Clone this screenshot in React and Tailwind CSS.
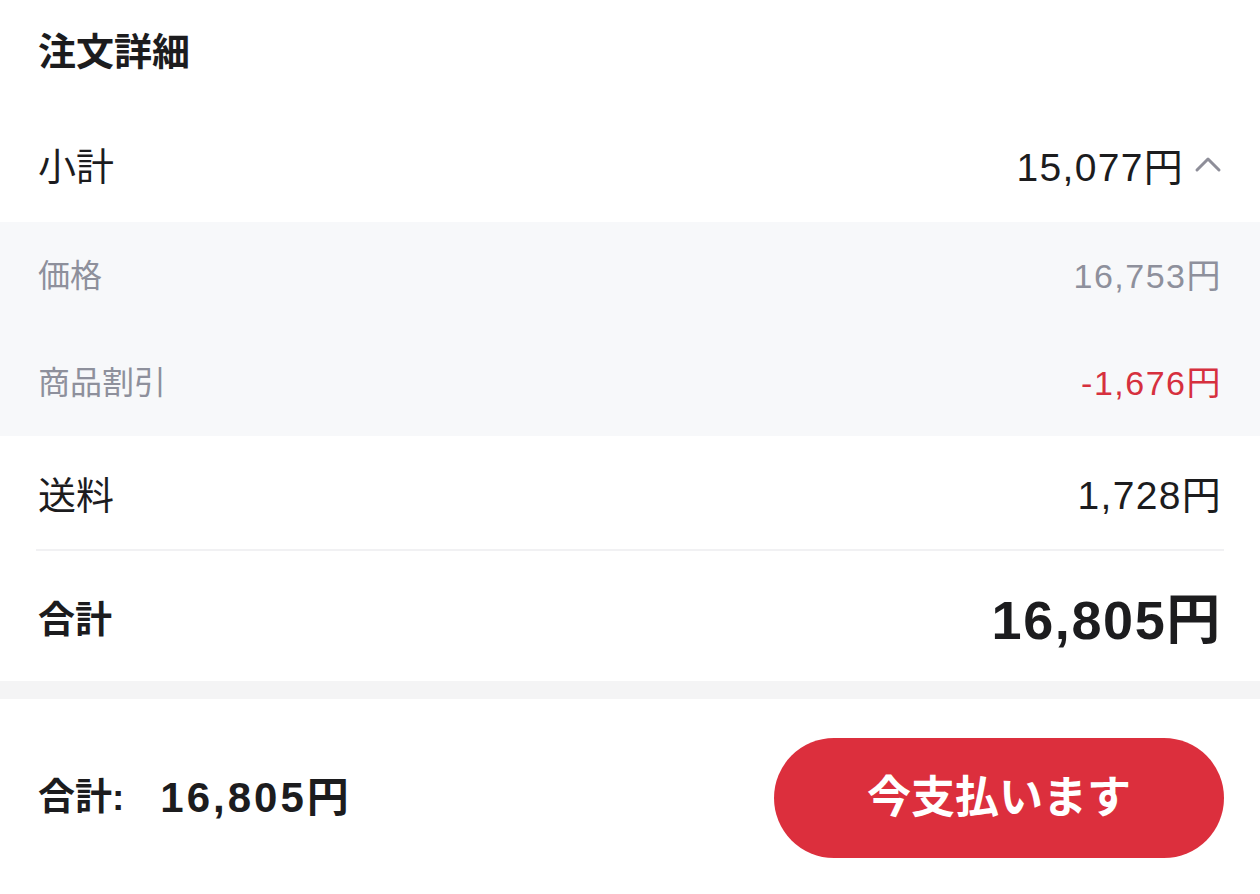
export default function App() {
  const font = { fontFamily: '"Liberation Sans", "Noto Sans CJK JP", sans-serif' };
  return (
    <div className="w-[1260px] h-[894px] bg-white flex flex-col text-[#1c1c1e]" style={font}>
      <div className="h-[104px] flex items-center px-[38px]">
        <h1 className="text-[38px] font-bold leading-none">注文詳細</h1>
      </div>
      <div className="h-[118px] flex items-center justify-between pl-[38px] pr-[38px] pt-[8px]">
        <span className="text-[38px] leading-none">小計</span>
        <div className="flex items-center gap-[10px]">
          <span className="text-[39px] leading-none tracking-[1.3px]">15,077円</span>
          <svg width="28" height="18" viewBox="0 0 28 18" className="mt-[-6px]">
            <polyline points="3,15 14,4 25,15" fill="none" stroke="#8e8e99" strokeWidth="3" strokeLinecap="round" strokeLinejoin="round" />
          </svg>
        </div>
      </div>
      <div className="bg-[#f7f8fa] flex flex-col">
        <div className="h-[108px] flex items-center justify-between px-[38px] text-[#8e909c]">
          <span className="text-[32px] leading-none">価格</span>
          <span className="text-[34px] leading-none tracking-[1.5px]">16,753円</span>
        </div>
        <div className="h-[106px] flex items-center justify-between px-[38px]">
          <span className="text-[32px] leading-none text-[#8e909c]">商品割引</span>
          <span className="text-[34px] leading-none tracking-[1.5px] text-[#d6303e]">-1,676円</span>
        </div>
      </div>
      <div className="px-[36px]">
        <div className="h-[115px] flex items-center justify-between px-[2px] pt-[6px] border-b-2 border-[#f1f1f3]">
          <span className="text-[38px] leading-none">送料</span>
          <span className="text-[39px] leading-none tracking-[1.3px]">1,728円</span>
        </div>
        <div className="h-[130px] flex items-center justify-between px-[2px] pt-[8px]">
          <span className="text-[37px] font-bold leading-none">合計</span>
          <span className="text-[54px] font-bold leading-none tracking-[0.03em]">16,805円</span>
        </div>
      </div>
      <div className="h-[18px] bg-[#f4f4f5]" />
      <div className="flex-1 flex items-center justify-between pl-[38px] pr-[36px] pt-[2px]">
        <div className="flex items-center leading-none font-bold">
          <span className="text-[37px]">合計:</span>
          <span className="text-[42px] tracking-[3px] ml-[36px]">16,805円</span>
        </div>
        <button className="w-[450px] h-[120px] rounded-full bg-[#dc2f3d] text-white text-[44px] font-bold leading-none flex items-center justify-center">
          今支払います
        </button>
      </div>
    </div>
  );
}
